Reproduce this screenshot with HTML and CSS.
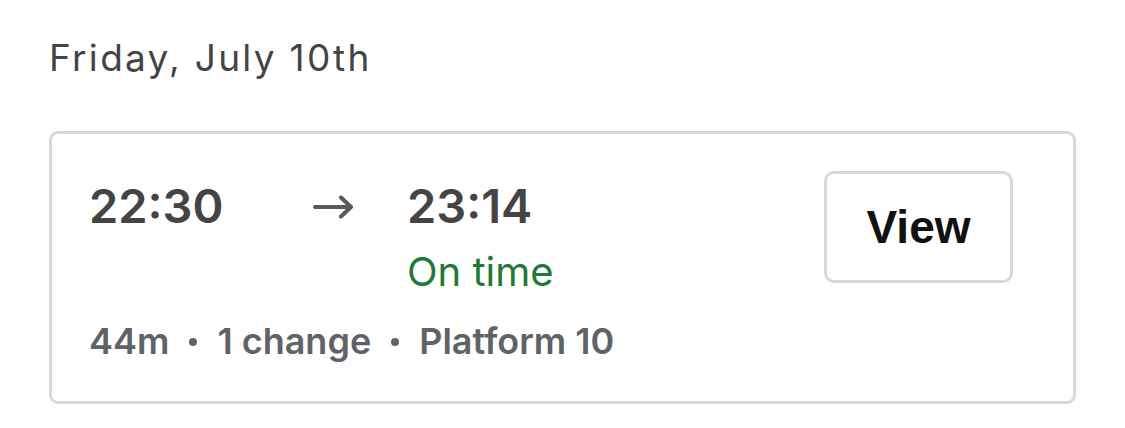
FILE: index.html
```html
<!DOCTYPE html>
<html lang="en">
<head>
<meta charset="utf-8">
<title>Journeys</title>
<link rel="stylesheet" href="styles.css">
</head>
<body>
  <main class="day">
    <h2 class="day-title">Friday, July 10th</h2>
    <article class="journey">
      <div class="journey-info">
        <div class="times">
          <span class="time dep">22:30</span>
          <svg class="arrow" width="42" height="24" viewBox="0 0 42 24" aria-hidden="true">
            <path d="M2 12H38M28 2.5L38 12L28 21.5" fill="none" stroke="#565b5f" stroke-width="4" stroke-linecap="round" stroke-linejoin="round"/>
          </svg>
          <div class="arr">
            <span class="time">23:14</span>
            <span class="status">On time</span>
          </div>
        </div>
        <div class="meta">44m<span class="dot"></span>1 change<span class="dot"></span>Platform 10</div>
      </div>
      <button class="view-btn" type="button">View</button>
    </article>
  </main>
</body>
</html>
```

FILE: styles.css
```css
html, body {
  margin: 0;
  background: #ffffff;
}

body {
  font-family: Inter, "Noto Sans", sans-serif;
  color: #444444;
}

.day {
  padding: 36px 49px 0 49px;
}

.day-title {
  margin: 0;
  font-size: 37px;
  font-weight: 400;
  line-height: 44px;
  letter-spacing: 2.3px;
  color: #444444;
}

.journey {
  margin-top: 51px;
  width: 1027px;
  box-sizing: border-box;
  border: 3px solid #d7d8da;
  border-radius: 9px;
  display: flex;
  justify-content: space-between;
  align-items: flex-start;
  padding: 37px 60px 38px 37px;
}

.journey-info {
  padding-top: 7px;
}

.times {
  display: flex;
  align-items: flex-start;
}

.time {
  font-size: 47px;
  font-weight: 600;
  line-height: 56px;
  color: #444444;
}

.dep {
  width: 224px;
}

.arrow {
  display: block;
  margin: 17px 52px 0 0;
}

.arr {
  display: flex;
  flex-direction: column;
}

.status {
  margin-top: 14px;
  font-size: 40px;
  line-height: 48px;
  color: #1e7a34;
}

.meta {
  margin-top: 23px;
  font-size: 36px;
  font-weight: 600;
  line-height: 44px;
  color: #5f6368;
  display: flex;
  align-items: center;
}

.dot {
  width: 8px;
  height: 8px;
  border-radius: 50%;
  background: #5f6368;
  margin: 2px 20px 0 20px;
}

.view-btn {
  width: 189px;
  height: 112px;
  box-sizing: border-box;
  border: 3px solid #d7d8da;
  border-radius: 10px;
  background: #ffffff;
  font-family: "Liberation Sans", Arial, sans-serif;
  font-weight: 700;
  font-size: 46px;
  color: #111111;
  padding: 0;
}
```
